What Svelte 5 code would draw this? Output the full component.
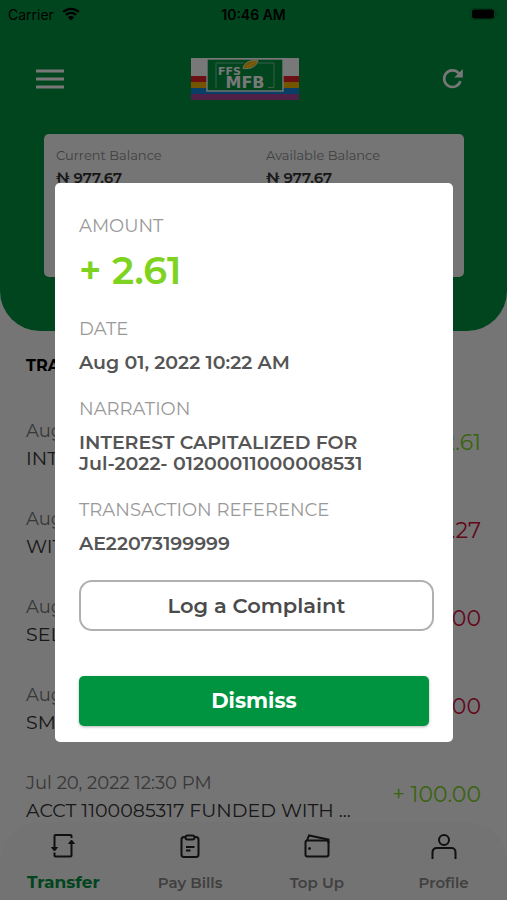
<script>
    let showDetails = true;

    const selected = {
        amount: "+ 2.61",
        date: "Aug 01, 2022 10:22 AM",
        narration: ["INTEREST CAPITALIZED FOR", "Jul-2022- 01200011000008531"],
        reference: "AE22073199999",
    };

    const balances = [
        { label: "Current Balance", value: "₦ 977.67" },
        { label: "Available Balance", value: "₦ 977.67" },
    ];

    const transactions = [
        { date: "Aug 01, 2022", title: "INTEREST", amount: "+ 2.61", credit: true },
        { date: "Aug 01, 2022", title: "WITHHOLDING", amount: "- 0.27", credit: false },
        { date: "Aug 01, 2022", title: "SELF", amount: "- 50.00", credit: false },
        { date: "Aug 01, 2022", title: "SMS", amount: "- 4.00", credit: false },
        { date: "Jul 20, 2022 12:30 PM", title: "ACCT 1100085317 FUNDED WITH ...", amount: "+ 100.00", credit: true },
    ];

    function closeDetails() {
        showDetails = false;
    }

    function openDetails() {
        showDetails = true;
    }
</script>

<div class="screen">
    <header class="top">
        <div class="status">
            <span class="status__carrier">
                Carrier
                <svg width="18" height="14" viewBox="0 0 18 14" aria-hidden="true">
                    <path d="M1.2 5A11.2 11.2 0 0 1 16.8 5M3.9 8A7.3 7.3 0 0 1 14.1 8" fill="none" stroke="#000" stroke-width="2.4" />
                    <path d="M9 13.6 5.8 10.2a4.6 4.6 0 0 1 6.4 0z" />
                </svg>
            </span>
            <span class="status__time">10:46 AM</span>
            <svg class="status__battery" width="29" height="12" viewBox="0 0 29 12" aria-hidden="true">
                <rect x="0.5" y="0.5" width="25" height="11" rx="3.5" fill="none" stroke="#000" stroke-opacity="0.2" />
                <rect x="2" y="1.5" width="22" height="9" rx="2.5" />
                <path d="M27 4v4c1.2-.4 1.2-3.6 0-4z" opacity="0.3" />
            </svg>
        </div>

        <div class="toolbar">
            <button class="icon-button" aria-label="Menu">
                <svg width="28" height="20" viewBox="0 0 28 20">
                    <path d="M0 2h28M0 10h28M0 18h28" stroke="#fff" stroke-width="3.2" />
                </svg>
            </button>
            <svg class="logo" width="108" height="42" viewBox="0 0 108 42" role="img" aria-label="FFS MFB">
                <rect width="108" height="18" fill="#fff" />
                <rect y="18" width="108" height="6" fill="#e3262e" />
                <rect y="24" width="108" height="6" fill="#f5b400" />
                <rect y="30" width="108" height="6" fill="#1487d8" />
                <rect y="36" width="108" height="6" fill="#a8479a" />
                <rect x="16" y="1" width="76" height="32" fill="#009440" stroke="#fff" stroke-width="1.4" />
                <path d="M53 5H25v24.500M67 5h16v24.500h-6" fill="none" stroke="#9fd0b0" stroke-width="0.8" />
                <text x="27" y="17" class="logo__ffs">FFS</text>
                <text x="54" y="30" class="logo__mfb">MFB</text>
                <path d="M52 10.500C53 4 60 1.500 67 2.500c-1 5.500-7 9-15 8z" fill="#f5b400" stroke="#fff" stroke-width="0.8" />
                <path d="M55 8.500c4-1 6-2.500 9-4.500" fill="none" stroke="#f9dd84" stroke-width="0.8" />
            </svg>
            <button class="icon-button" aria-label="Refresh">
                <svg width="22" height="22" viewBox="0 0 22 22">
                    <path d="M18.400 13.200A8.300 8.300 0 1 1 16.600 5.100L18 6.600" fill="none" stroke="#fff" stroke-width="2.600" />
                    <path d="M20.800 1v8.600h-8.600z" fill="#fff" />
                </svg>
            </button>
        </div>

        <section class="balance-card">
            {#each balances as balance}
                <div class="balance">
                    <div class="balance__label">{balance.label}</div>
                    <div class="balance__value">{balance.value}</div>
                </div>
            {/each}
        </section>
    </header>

    <main class="history">
        <h2>TRANSACTIONS</h2>
        {#each transactions as item}
            <button class="transaction" on:click={openDetails}>
                <span class="transaction__text">
                    <span class="transaction__date">{item.date}</span>
                    <span class="transaction__title">{item.title}</span>
                </span>
                <span class="transaction__amount" class:credit={item.credit}>{item.amount}</span>
            </button>
        {/each}
    </main>

    <nav class="tabs">
        <a href="#transfer" class="tab active">
            <svg width="26" height="26" viewBox="0 0 26 26">
                <path d="M4.500 15V3a1 1 0 0 1 1-1H20.500a1 1 0 0 1 1 1V5M21.500 10v12.500a1 1 0 0 1-1 1H5.500a1 1 0 0 1-1-1V19.500" />
                <path class="solid" d="M1.500 14.500h6l-3 3.500zM18.500 10.500h6l-3-3.500z" />
            </svg>
            Transfer
        </a>
        <a href="#bills" class="tab">
            <svg width="26" height="26" viewBox="0 0 26 26">
                <path d="M8.500 4H7a2.500 2.500 0 0 0-2.500 2.500v15A2.500 2.500 0 0 0 7 24h12a2.500 2.500 0 0 0 2.500-2.500v-15A2.500 2.500 0 0 0 19 4h-1.500" />
                <path d="M10.500 2.500h5c1.500 0 2 1 2 2s-.5 2-2 2h-5c-1.500 0-2-1-2-2s.5-2 2-2zM9 14h8.500M9 17.500h4.500" />
            </svg>
            Pay Bills
        </a>
        <a href="#topup" class="tab">
            <svg width="26" height="26" viewBox="0 0 26 26">
                <rect x="1.500" y="7.500" width="23" height="16" rx="2" />
                <path d="M3 7.500 5 2.500 24.500 6.500V10" />
                <circle class="solid" cx="5.500" cy="15.500" r="1" />
            </svg>
            Top Up
        </a>
        <a href="#profile" class="tab">
            <svg width="26" height="26" viewBox="0 0 26 26">
                <circle cx="13" cy="7" r="5" />
                <path d="M1.500 26v-7a4 4 0 0 1 4-4h15a4 4 0 0 1 4 4v7" />
            </svg>
            Profile
        </a>
    </nav>
</div>

{#if showDetails}
    <div class="overlay">
        <div class="dialog" role="dialog" aria-modal="true" aria-label="Transaction details">
            <dl>
                <dt>AMOUNT</dt>
                <dd class="dialog__amount">{selected.amount}</dd>
                <dt>DATE</dt>
                <dd>{selected.date}</dd>
                <dt>NARRATION</dt>
                <dd>
                    {#each selected.narration as line}
                        <div>{line}</div>
                    {/each}
                </dd>
                <dt>TRANSACTION REFERENCE</dt>
                <dd>{selected.reference}</dd>
            </dl>
            <button class="complaint">Log a Complaint</button>
            <button class="dismiss" on:click={closeDetails}>Dismiss</button>
        </div>
    </div>
{/if}

<style>
    :global(body) {
        margin: 0;
        background: #f9f9f9;
        font-family: Montserrat, Inter, "Open Sans", sans-serif;
    }

    button {
        padding: 0;
        border: 0;
        background: none;
        font-family: inherit;
        cursor: pointer;
    }

    svg {
        display: block;
    }

    .screen {
        display: flex;
        flex-direction: column;
        height: 100vh;
        overflow: hidden;
    }

    .top {
        flex: none;
        padding-bottom: 54px;
        background: #009440;
        border-radius: 0 0 40px 40px;
    }

    .status {
        display: grid;
        grid-template-columns: 1fr auto 1fr;
        align-items: center;
        height: 28px;
        padding: 0 8px;
        font-family: Inter, "Liberation Sans", sans-serif;
        font-size: 14px;
    }

    .status__carrier {
        display: flex;
        align-items: center;
        gap: 8px;
    }

    .status__time {
        font-weight: 600;
    }

    .status__battery {
        justify-self: end;
    }

    .toolbar {
        display: grid;
        grid-template-columns: 1fr auto 1fr;
        align-items: center;
        margin: 30px 43px 34px 36px;
    }

    .icon-button:last-child {
        justify-self: end;
    }

    .icon-button:first-child {
        justify-self: start;
    }

    .logo {
        margin-right: 10px;
    }

    .logo__ffs {
        fill: #fff;
        font: bold 11px "DejaVu Sans", sans-serif;
    }

    .logo__mfb {
        fill: #fff;
        font: bold 16px "DejaVu Sans", sans-serif;
        text-anchor: middle;
    }

    .balance-card {
        display: grid;
        grid-template-columns: 1fr 1fr;
        min-height: 143px;
        margin: 0 43px 0 44px;
        background: #f9f9f9;
        border-radius: 5px;
    }

    .balance {
        padding: 10px 12px;
    }

    .balance__label {
        color: #8a8a8a;
        font-size: 13px;
        line-height: 22px;
    }

    .balance__value {
        color: #333;
        font-size: 15px;
        font-weight: 600;
        line-height: 24px;
    }

    .history {
        flex: 1;
        min-height: 0;
        padding: 25px 26px 0;
        overflow: hidden;
    }

    h2 {
        margin: 0 0 26px;
        font-size: 16px;
        font-weight: 700;
        line-height: 20px;
    }

    .transaction {
        display: flex;
        justify-content: space-between;
        width: 100%;
        padding: 17px 0;
        text-align: left;
    }

    .transaction__text {
        display: grid;
        gap: 2px;
    }

    .transaction__date {
        color: #777;
        font-size: 18px;
        line-height: 24px;
    }

    .transaction__title {
        color: #333;
        font-size: 19px;
        line-height: 28px;
    }

    .transaction__amount {
        color: #d0103c;
        font-size: 22px;
        line-height: 48px;
    }

    .transaction__amount.credit {
        color: #7ed321;
    }

    .tabs {
        display: grid;
        grid-template-columns: repeat(4, 1fr);
        flex: none;
        height: 78px;
        background: #f4f4f4;
        border-radius: 40px 40px 0 0;
    }

    .tab {
        display: flex;
        flex-direction: column;
        align-items: center;
        gap: 12px;
        padding-top: 11px;
        color: #888;
        font-size: 15px;
        font-weight: 600;
        line-height: 24px;
        text-decoration: none;
    }

    .tab.active {
        gap: 11px;
        color: #009440;
        font-size: 17px;
        font-weight: 700;
    }

    .tab svg {
        fill: none;
        stroke: #222;
        stroke-width: 2;
    }

    .tab .solid {
        fill: #222;
        stroke-width: 1;
    }

    .overlay {
        position: fixed;
        inset: 0;
        display: grid;
        align-items: center;
        padding: 24px 54px 0 55px;
        background: rgba(0, 0, 0, 0.53);
    }

    .dialog {
        display: flex;
        flex-direction: column;
        padding: 31px 24px 16px;
        background: #fff;
        border-radius: 5px;
    }

    dl {
        margin: 0 0 26px;
    }

    dt {
        margin-bottom: 11px;
        color: #999;
        font-size: 18px;
        font-weight: 400;
        line-height: 24px;
    }

    dd {
        margin: 0 0 24px;
        color: #555;
        font-size: 19px;
        font-weight: 600;
        line-height: 21px;
    }

    dd:last-child {
        margin-bottom: 0;
    }

    .dialog__amount {
        margin: 15px 0 28px;
        color: #7ed321;
        font-size: 38px;
        line-height: 36px;
    }

    .complaint {
        height: 51px;
        margin: 0 -5px 45px 0;
        color: #4a4a4a;
        border: 2px solid #b0b0b0;
        border-radius: 13px;
        font-size: 21px;
        font-weight: 600;
    }

    .dismiss {
        height: 50px;
        color: #fff;
        background: #009440;
        border-radius: 5px;
        box-shadow: 0 1px 3px rgba(0, 0, 0, 0.3);
        font-size: 21px;
        font-weight: 700;
    }
</style>
